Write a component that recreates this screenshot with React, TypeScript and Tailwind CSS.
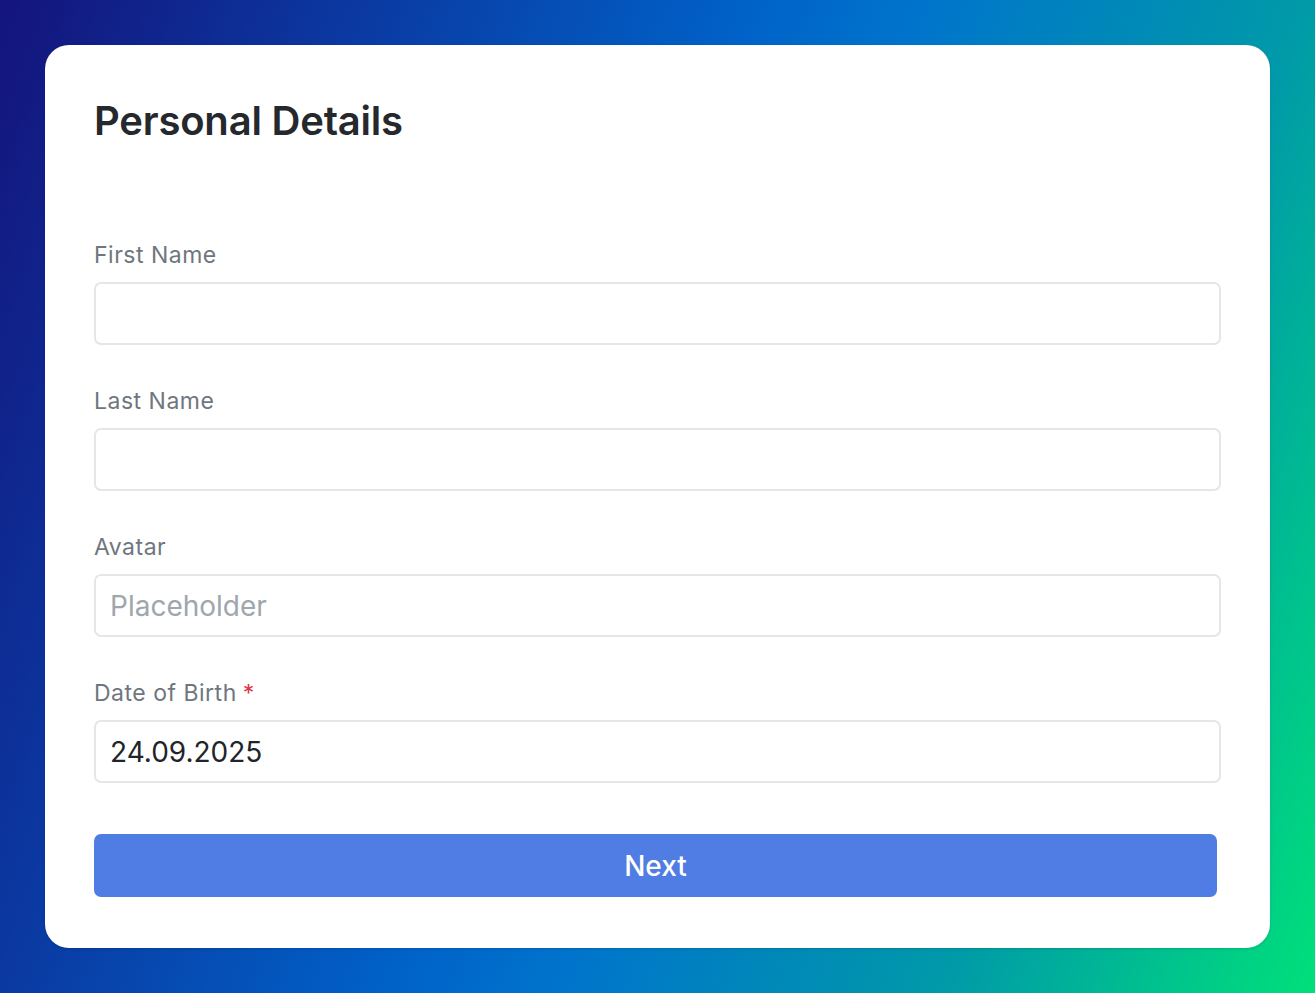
import { useState } from "react";

function Field({
  label,
  required,
  value,
  placeholder,
  onChange,
}: {
  label: string;
  required?: boolean;
  value: string;
  placeholder?: string;
  onChange: (v: string) => void;
}) {
  return (
    <div className="flex flex-col">
      <label className="mb-[12px] text-[23px] leading-[30px] tracking-[0.5px] text-[#6f767e]">
        {label}
        {required && <span className="ml-[6px] text-[#dc3545]">*</span>}
      </label>
      <input
        value={value}
        placeholder={placeholder}
        onChange={(e) => onChange(e.target.value)}
        className="h-[63px] w-full rounded-[7px] border-2 border-[#e4e6e9] bg-white px-[14px] text-[28px] text-[#212529] outline-none placeholder:text-[#a0a6ae]"
      />
    </div>
  );
}

export default function App() {
  const [first, setFirst] = useState("");
  const [last, setLast] = useState("");
  const [avatar, setAvatar] = useState("");
  const [dob, setDob] = useState("24.09.2025");

  return (
    <div className="h-[993px] w-full bg-[linear-gradient(110deg,#14147c_0%,#0a3aa2_22%,#0062c8_45%,#0074cc_55%,#009aa8_78%,#00e07a_100%)] p-[45px] font-['Inter',sans-serif]">
      <div className="flex h-full flex-col rounded-[24px] bg-white px-[49px] pt-[52px] pb-[50px] shadow-sm">
        <h1 className="mb-[95px] text-[40px] leading-[48px] font-semibold tracking-[-0.2px] text-[#25282c]">
          Personal Details
        </h1>

        <div className="flex flex-col gap-[41px]">
          <Field label="First Name" value={first} onChange={setFirst} />
          <Field label="Last Name" value={last} onChange={setLast} />
          <Field label="Avatar" value={avatar} placeholder="Placeholder" onChange={setAvatar} />
          <Field label="Date of Birth" required value={dob} onChange={setDob} />
        </div>

        <button
          type="button"
          className="mt-[51px] mr-[4px] h-[63px] rounded-[7px] bg-[#4f7de3] text-[28px] font-medium text-white"
        >
          Next
        </button>
      </div>
    </div>
  );
}
